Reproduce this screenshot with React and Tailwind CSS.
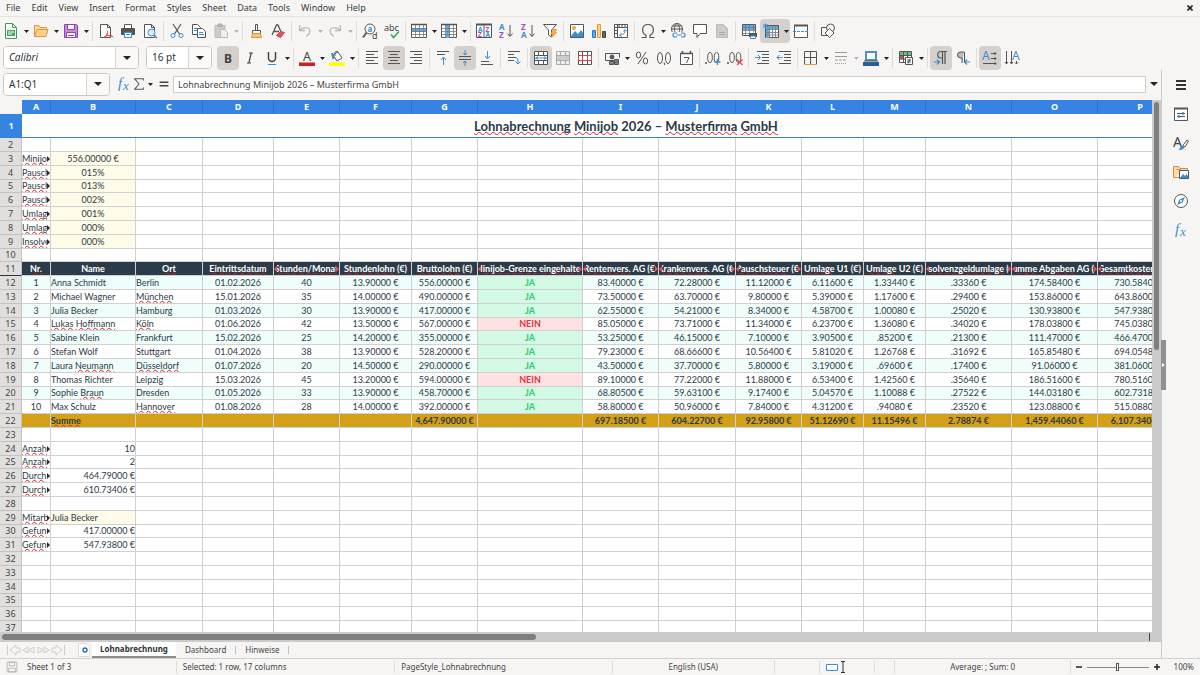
import React from "react";

/* ---------- icons (16x16 grid) ---------- */

const Svg = ({ children, size = 16, className = "" }) => (
  <svg
    width={size}
    height={size}
    viewBox="0 0 16 16"
    fill="none"
    stroke="#555"
    strokeWidth="1"
    className={`shrink-0 overflow-visible ${className}`}
    aria-hidden="true"
  >
    {children}
  </svg>
);

const Letter = ({ x, y, size, fill = "#444", bold, italic, children }) => (
  <text
    x={x}
    y={y}
    fontSize={size}
    fill={fill}
    stroke="none"
    fontFamily="Noto Sans, sans-serif"
    fontWeight={bold ? 700 : 400}
    fontStyle={italic ? "italic" : "normal"}
  >
    {children}
  </text>
);

const BLUE = "#3a8fd0";
const GRID = "M.5 5.5h15M.5 8.5h15M.5 11.5h15M4.5 1v14M8.5 1v14M12.5 1v14";

const icons = {
  new: (
    <>
      <path d="M2.5.5h7l4 4v11h-11z" fill="#fff" stroke="#3f9b52" />
      <path d="M9.5.5v4h4" stroke="#3f9b52" />
      <path d="M4 7h8v6H4z" fill="#43a85a" stroke="none" />
      <path d="M5 9h6M5 11h4" stroke="#fff" />
    </>
  ),
  open: (
    <>
      <path d="M1.5 13.5v-11h4l1.5 2h6.5v2" fill="#f9d9a0" stroke="#e0943c" />
      <path d="M1.5 13.5l2.5-7h11l-2 7z" fill="#fbd08a" stroke="#e0943c" />
    </>
  ),
  save: (
    <>
      <path d="M1.5 1.5h12l1 1v12h-13z" fill="#c98ad8" stroke="#8e44ad" />
      <path d="M4.5 1.5h7v5h-7zM3.5 9.5h9v5h-9z" fill="#fff" stroke="#8e44ad" />
      <path d="M5 12.5h6" stroke="#8e44ad" />
    </>
  ),
  pdf: (
    <>
      <path d="M2.5 1.5h7l3 3v10h-10z" fill="#fff" />
      <path d="M9.5 1.5v3h3" />
      <path d="M6 15c3-2 4-5 3.500-7M8 11c2 2 5 2.500 7 2.500M6 14c3-2 6-2 8-1" stroke="#e0444c" />
    </>
  ),
  print: (
    <>
      <path d="M4.500 1.500h7v4h-7z" fill="#fff" />
      <rect x="1" y="5" width="14" height="7" rx="1" fill="#555" stroke="none" />
      <path d="M4.500 9.500h7v5h-7z" fill="#fff" stroke={BLUE} />
      <path d="M6 11.500h4" stroke={BLUE} />
    </>
  ),
  preview: (
    <>
      <path d="M2.500 1.500h7l3 3v10h-10z" fill="#fff" />
      <path d="M9.500 1.500v3h3" />
      <circle cx="9.500" cy="9.500" r="3.500" fill="#d7ebfa" stroke={BLUE} />
      <path d="M12 12l3 3" stroke={BLUE} strokeWidth="1.500" />
    </>
  ),
  cut: (
    <>
      <path d="M4 1l6.500 10M12 1L5.500 11" stroke="#555" strokeWidth="1.200" />
      <circle cx="4" cy="12.500" r="2" stroke={BLUE} />
      <circle cx="12" cy="12.500" r="2" stroke={BLUE} />
    </>
  ),
  copy: (
    <>
      <path d="M1.500 1.500h5l3 3v7h-8z" fill="#fff" />
      <path d="M3 5.500h4M3 7.500h3" stroke={BLUE} />
      <path d="M6.500 5.500h5l3 3v6h-8z" fill="#fff" />
      <path d="M8 9.500h4M8 11.500h5" stroke={BLUE} />
    </>
  ),
  paste: (
    <>
      <path d="M2 2.500h10v12H2z" fill="#ccc" stroke="#bbb" />
      <path d="M5 1h4v2.500H5z" fill="#bbb" stroke="#aaa" />
      <path d="M7.500 6.500h4l3 3v5h-7z" fill="#eee" stroke="#bbb" />
    </>
  ),
  brush: (
    <>
      <path d="M7.500 1.500h2v6h-2z" fill="#fff" />
      <path d="M4.500 7.500h8v3h-8z" fill="#fff" />
      <path d="M4.500 10.500h8l1 4h-10z" fill="#f6c27a" stroke="#e0943c" />
    </>
  ),
  clear: (
    <>
      <path d="M2 12L6.500 2h1.500l3 7M4 8.500h5" strokeWidth="1.300" />
      <path d="M6.500 12.500l4-4 4 1-4 5z" fill="#e8505b" stroke="#d33b45" />
    </>
  ),
  undo: <path d="M2.500 2v5.500H8M2.500 7.500C6 3 13 4 13 8c0 3-2 4-4 5.500" stroke="#bbb" strokeWidth="1.300" />,
  redo: <path d="M13.500 2v5.500H8M13.500 7.500C10 3 3 4 3 8c0 3 2 4 4 5.500" stroke="#bbb" strokeWidth="1.300" />,
  find: (
    <>
      <circle cx="8" cy="6" r="5" fill="#fff" />
      <path d="M4.500 9.500L1 14.500" strokeWidth="1.800" />
      <Letter x="5.500" y="8.500" size="8" fill={BLUE} bold>a</Letter>
      <Letter x="10" y="15.500" size="9">d</Letter>
    </>
  ),
  spell: (
    <>
      <Letter x="0" y="8" size="9">abc</Letter>
      <path d="M7 11.500l2.500 3L15 8.500" stroke="#33a852" strokeWidth="1.500" />
    </>
  ),
  rows: (
    <>
      <path d="M.5 1.500h15v13H.5z" fill="#fff" />
      <path d="M1 5h14v4H1z" fill="#5aaee8" stroke="none" />
      <path d={GRID} stroke="#777" strokeWidth="0.800" />
      <path d="M0 1.500h16" strokeWidth="1.500" />
    </>
  ),
  cols: (
    <>
      <path d="M.5 1.500h15v13H.5z" fill="#fff" />
      <path d="M5 1h4v14H5z" fill="#5aaee8" stroke="none" />
      <path d={GRID} stroke="#777" strokeWidth="0.800" />
      <path d="M0 1.500h16" strokeWidth="1.500" />
    </>
  ),
  sort: (
    <>
      <path d="M.5 1.500h15v13H.5zM8 1v14" fill="#fff" />
      <path d="M0 1.500h16" strokeWidth="2" />
      <Letter x="2" y="8.500" size="6.500" fill={BLUE} bold>A</Letter>
      <Letter x="2" y="14" size="6.500" fill="#a24bbd" bold>Z</Letter>
      <Letter x="9.500" y="8.500" size="6.500" fill="#a24bbd" bold>Z</Letter>
      <Letter x="9.500" y="14" size="6.500" fill={BLUE} bold>A</Letter>
    </>
  ),
  asc: (
    <>
      <Letter x="1" y="7" size="8" fill={BLUE} bold>A</Letter>
      <Letter x="1" y="15" size="8" fill="#a24bbd" bold>Z</Letter>
      <path d="M12 2v11M9.500 10.500l2.500 3 2.500-3" />
    </>
  ),
  desc: (
    <>
      <Letter x="1" y="7" size="8" fill="#a24bbd" bold>Z</Letter>
      <Letter x="1" y="15" size="8" fill={BLUE} bold>A</Letter>
      <path d="M12 2v11M9.500 10.500l2.500 3 2.500-3" />
    </>
  ),
  filter: (
    <>
      <path d="M1.500 1.500h13L9.500 7v7l-3-2V7z" fill="#fff" />
      <path d="M11.500 6.500h3l-2 3h2l-5 5 1.500-4h-2z" fill="#f9b64a" stroke="#e89a2c" />
    </>
  ),
  image: (
    <>
      <path d="M1.500 1.500h13v13h-13z" fill="#fff" />
      <path d="M2 13l4-5 3 3 3-4 2 3v4H2z" fill="#3a8fd0" stroke="none" />
      <circle cx="5" cy="5" r="1.500" fill="#f9c05a" stroke="#e89a2c" />
    </>
  ),
  chart: (
    <>
      <path d="M1.500 7.500h3v7h-3z" fill="#5aaee8" stroke="#2a78b8" />
      <path d="M6.500 1.500h3v13h-3z" fill="#fbd08a" stroke="#e89a2c" />
      <path d="M11.500 8.500h3v6h-3z" fill="#666" stroke="#444" />
    </>
  ),
  pivot: (
    <>
      <path d="M1.500 1.500h13v13h-13zM1.500 4.500h13M4.500 1.500v13" fill="#fff" />
      <path d="M6 1.500v3M9 1.500v3M12 1.500v3M1.500 7.500h3M1.500 10.500h3" />
      <path d="M7 12c4 0 5-2 5-5M10.500 8.500L12 6.500l2 2M8.500 10l-2 2 2 2" stroke={BLUE} />
    </>
  ),
  omega: (
    <path d="M1.500 14.500H6v-2C1 9.500 1.500 1.500 8 1.500s7 8 2 11v2h4.500" strokeWidth="1.200" />
  ),
  link: (
    <>
      <circle cx="7" cy="6" r="5.500" />
      <path d="M1.500 6h11M7 .5c-3.500 3-3.500 8 0 11M7 .5c3.500 3 3.500 8 0 11M2.500 3h9" />
      <path d="M2 9h13v6H2z" fill="#f6f5f4" stroke="none" />
      <path d="M7 10H5a2 2 0 000 4h2M11 10h2a2 2 0 010 4h-2M6.500 12h5" stroke={BLUE} strokeWidth="1.200" />
    </>
  ),
  comment: <path d="M1.500 1.500h13v9H8L5 14.500v-4H1.500z" fill="#fff" />,
  headfoot: (
    <>
      <path d="M2.500 1.500h7l4 4v9h-11z" fill="#ccc" stroke="#bbb" />
      <path d="M5 9.500h6M5 11.500h6" stroke="#aaa" />
    </>
  ),
  printarea: (
    <>
      <path d="M1.500 1.500h13v11h-13z" fill="#fff" />
      <path d="M2 2h12v5H2z" fill="#5aaee8" stroke="none" />
      <path d="M1.500 4.500h13M1.500 7.500h13M1.500 10.500h8M4.500 1.500v11M8.500 1.500v11M12.500 1.500v8" stroke="#777" strokeWidth="0.800" />
      <rect x="8" y="10" width="8" height="4" fill="#555" stroke="none" />
      <path d="M9.500 13h5v2.500h-5z" fill="#fff" stroke={BLUE} />
    </>
  ),
  freeze: (
    <>
      <path d="M2.500 2.500h13v12h-13z" fill="#fff" />
      <path d="M3 3h12v3H3zM3 3h3v12H3z" fill="#5aaee8" stroke="none" />
      <path d="M2.500 6.500h13M2.500 9.500h13M2.500 12h13M6.500 2.500v12M9.500 2.500v12M12.500 2.500v12" stroke="#777" strokeWidth="0.800" />
      <path d="M0 3h5M2.500 .5v5M.5 1l4 4M4.500 1l-4 4" stroke={BLUE} />
    </>
  ),
  split: (
    <>
      <path d="M1.500 2.500h13v12h-13z" fill="#fff" />
      <path d="M1 2.500h14" strokeWidth="2" />
      <path d="M0 8.500h16" stroke={BLUE} strokeDasharray="3 1" />
    </>
  ),
  shapes: (
    <>
      <path d="M1.500 4.500h8v8h-8z" />
      <circle cx="10.500" cy="5" r="4" fill="#f6f5f4" />
      <path d="M9.500 5.500l4.500 4.500-4.500 4.500L5 10z" fill="#f6f5f4" />
    </>
  ),
  bold: <Letter x="4" y="12.500" size="12" bold>B</Letter>,
  italic: <path d="M7 3h4M5 13h4M9.200 3L6.800 13" strokeWidth="1.200" stroke="#444" />,
  underline: (
    <>
      <path d="M4.500 2v6a3.500 3.500 0 007 0V2" stroke="#444" strokeWidth="1.500" />
      <path d="M4 14.500h8" stroke={BLUE} />
    </>
  ),
  fontcolor: (
    <>
      <Letter x="4" y="11" size="12.500">A</Letter>
      <path d="M0 12.500h16v3.500H0z" fill="#c9211e" stroke="none" />
    </>
  ),
  highlight: (
    <>
      <path d="M4 5l5-3 4 6-5 3z" fill="#fff" />
      <path d="M9 2c-2-2-4 0-3 4" />
      <path d="M3 3l1.500 6" stroke={BLUE} strokeWidth="2" />
      <path d="M0 12.500h16v3.500H0z" fill="#ffff00" stroke="none" />
    </>
  ),
  left: <path d="M2 1.500h12M2 4.500h8M2 7.500h12M2 10.500h8M2 13.500h12" />,
  center: <path d="M2 1.500h12M4 4.500h8M2 7.500h12M4 10.500h8M2 13.500h12" />,
  right: <path d="M2 1.500h12M6 4.500h8M2 7.500h12M6 10.500h8M2 13.500h12" />,
  top: (
    <>
      <path d="M2 1.500h12M2 4.500h8" />
      <path d="M8.500 15V7.500M6 10l2.500-3 2.500 3" stroke={BLUE} />
    </>
  ),
  middle: (
    <>
      <path d="M2 6.500h12M2 9.500h12" />
      <path d="M8 0v5M6 3l2 2 2-2M8 16v-5M6 13l2-2 2 2" stroke={BLUE} />
    </>
  ),
  bottom: (
    <>
      <path d="M2 11.500h8M2 14.500h12" />
      <path d="M8.500 1v7.500M6 6l2.500 3 2.500-3" stroke={BLUE} />
    </>
  ),
  wrap: (
    <>
      <path d="M2 1.500h12M2 4.500h6M2 7.500h8M2 10.500h6" />
      <path d="M9 7.500c3 0 3 2 3 6M9.500 11.500l2.500 2.500 2.500-2.500" stroke={BLUE} />
    </>
  ),
  mergecenter: (
    <>
      <path d="M1.500 1.500h13v13h-13z" fill="#fff" />
      <path d="M1.500 5.500h13M1.500 10.500h13M5.500 1.500v4M10.500 1.500v4M5.500 10.500v4M10.500 10.500v4" />
      <path d="M2 8h12M5 6.500L3 8l2 1.500M11 6.500L13 8l-2 1.500" stroke={BLUE} />
    </>
  ),
  merge: (
    <>
      <path d="M1.500 1.500h13v13h-13z" fill="#eee" stroke="#aaa" />
      <path d="M2 6h12v4H2z" fill="#ccc" stroke="none" />
      <path d="M1.500 5.500h13M1.500 10.500h13M5.500 1.500v4M10.500 1.500v4M5.500 10.500v4M10.500 10.500v4" stroke="#aaa" />
    </>
  ),
  unmerge: (
    <>
      <path d="M1.500 1.500h13v13h-13z" fill="#fff" />
      <path d="M5.500 1.500v13M10.500 1.500v13" />
      <path d="M1.500 5.500h13v5h-13zM5.500 5.500v5M10.500 5.500v5" stroke="#e0444c" />
    </>
  ),
  currency: (
    <>
      <path d="M10 10.500H1.500v-7h14v4" />
      <circle cx="8" cy="7" r="2" fill="#555" />
      <path d="M10.500 9.500h4v5h-4zM10.500 12h4M5.500 11.500h4v3h-4z" fill="#888" />
    </>
  ),
  percent: (
    <>
      <ellipse cx="4.500" cy="5" rx="2.200" ry="3" />
      <ellipse cx="11.500" cy="11" rx="2.200" ry="3" />
      <path d="M12 2L4 14" />
    </>
  ),
  number: (
    <>
      <ellipse cx="4" cy="8" rx="2.500" ry="5.500" />
      <ellipse cx="12" cy="8" rx="2.500" ry="5.500" />
      <path d="M7.500 13h1v2" />
    </>
  ),
  date: (
    <>
      <path d="M2.500 3.500h12v11h-12z" fill="#fff" />
      <path d="M2 3.500h13M4.500 1v3M12.500 1v3" strokeWidth="1.600" />
      <path d="M6 7.500h5l-2.500 5.500" />
    </>
  ),
  adddec: (
    <>
      <ellipse cx="5" cy="7.500" rx="2.300" ry="5" />
      <ellipse cx="11.500" cy="7.500" rx="2.300" ry="5" />
      <path d="M0 13h2" strokeWidth="1.500" />
      <path d="M12.500 9v6M9.500 12h6" stroke={BLUE} strokeWidth="1.300" />
    </>
  ),
  deldec: (
    <>
      <ellipse cx="5" cy="7.500" rx="2.300" ry="5" />
      <ellipse cx="11.500" cy="7.500" rx="2.300" ry="5" />
      <path d="M0 13h2" strokeWidth="1.500" />
      <path d="M10 9.500l5.500 5.500M15.500 9.500L10 15" stroke="#e0444c" strokeWidth="1.300" />
    </>
  ),
  indent: (
    <>
      <path d="M3 1.500h12M8 4.500h7M8 7.500h7M8 10.500h7M3 13.500h12" />
      <path d="M1 7.500h5M4 5l2.500 2.500L4 10" stroke={BLUE} />
    </>
  ),
  outdent: (
    <>
      <path d="M3 1.500h12M8 4.500h7M8 7.500h7M8 10.500h7M3 13.500h12" />
      <path d="M1 7.500h5.500M3.500 5L1 7.500 3.500 10" stroke={BLUE} />
    </>
  ),
  border: (
    <>
      <path d="M1.500 14V1.500h12V14M7.500 1.500V14M1.500 7.500h12" />
      <path d="M1 14.500h13" stroke="#e89a2c" />
    </>
  ),
  linestyle: (
    <>
      <path d="M2 2.500h12M2 6.500h12" stroke="#999" />
      <path d="M2 10h12" stroke="#999" strokeDasharray="3 1" />
      <path d="M2 13.500h12" stroke="#999" strokeDasharray="1 1" />
    </>
  ),
  bordercolor: (
    <>
      <path d="M3 2h10v8H3z" fill="#fff" stroke="#4a90d0" strokeWidth="2" />
      <path d="M1 11h14" />
      <path d="M0 12h16v4H0z" fill="#2a6099" stroke="none" />
    </>
  ),
  condfmt: (
    <>
      <path d="M1.500 1.500h12v11h-12z" fill="#fff" />
      <path d="M2 2h5v3H2z" fill="#66c27a" stroke="none" />
      <path d="M6 2h7v3H6z" fill="#66c27a" stroke="none" />
      <path d="M2 6h4v3H2z" fill="#e0444c" stroke="none" />
      <path d="M1.500 5.500h12M1.500 9h12M5.500 1.500v11M9.500 1.500v11" />
      <path d="M7.500 7.500h7v7h-7zM9 10h4M9 12h4M12 9l-2 4.500" fill="#fff" />
    </>
  ),
  ltr: (
    <>
      <path d="M9.500 14V2M12 14V2M14 1.500H8a3.200 3.200 0 000 6.500h1" fill="none" strokeWidth="1.200" />
      <path d="M1 12h5M4 9.500L6.500 12 4 14.500" stroke={BLUE} strokeWidth="1.200" />
    </>
  ),
  rtl: (
    <>
      <path d="M9 2H5.500a3 3 0 000 6H7v5M9.500 2v11" fill="#bbb" />
      <path d="M15 12h-5M12 9.500L9.500 12l2.500 2.500" stroke={BLUE} strokeWidth="1.200" />
    </>
  ),
  horiz: (
    <>
      <Letter x="0" y="10" size="12" fill={BLUE}>A</Letter>
      <path d="M9 3.500h5M12.500 2l1.500 1.500L12.500 5M9 8.500h5M12.500 7l1.500 1.500-1.500 1.500M1 13.500h13M12.500 12l1.500 1.500-1.500 1.500" />
    </>
  ),
  vert: (
    <>
      <Letter x="8" y="10" size="12" fill={BLUE}>A</Letter>
      <path d="M2.500 1v13M1 12l1.500 2L4 12M7.500 1v13M6 12l1.500 2L9 12M12.500 11v3M11 12.500l1.500 1.500 1.500-1.500" />
    </>
  ),
  menu: <path d="M3 4h10M3 8h10M3 12h10" stroke="#333" strokeWidth="2" />,
  properties: (
    <>
      <path d="M1.500 2.500h13v12h-13z" fill="#fff" />
      <path d="M1 2.500h14" strokeWidth="2" />
      <path d="M4 7.500h8M4 10.500h8" />
      <path d="M10 6v3M6 9v3" stroke={BLUE} strokeWidth="1.500" />
    </>
  ),
  styles: (
    <>
      <Letter x="0" y="12" size="14">A</Letter>
      <path d="M9.500 11l4.500-6 1.500 1-3.500 6z" fill="#fff" />
      <path d="M5 14.500c2 0 2-3.500 5-3.500 3 2-1 5-5 3.500z" fill={BLUE} stroke="none" />
    </>
  ),
  gallery: (
    <>
      <path d="M.5 13.500v-11h5l1.500 2h7.500v2" fill="#fbd9a8" stroke="#e0843c" />
      <path d="M3.500 5.500h4v8h-7" stroke="#e0843c" />
      <path d="M6.500 6.500h9v8h-9z" fill="#fff" />
      <path d="M7 14l3-4 2 2 1.500-2 1.500 2v2z" fill={BLUE} stroke="none" />
    </>
  ),
  navigator: (
    <>
      <circle cx="8" cy="8" r="6.500" fill="#fff" />
      <path d="M12 4L9.500 9.500 4 12l2.500-5.500z" fill={BLUE} stroke="none" />
      <circle cx="8" cy="8" r="1" fill="#fff" stroke="none" />
    </>
  ),
  sigma: <path d="M13 4V2H3l5 6-5 6h10v-2" stroke="#555" strokeWidth="1.200" />,
  equals: <path d="M3 6h10M3 10h10" stroke="#444" strokeWidth="1.800" />,
};

const FxIcon = () => (
  <svg width="16" height="16" viewBox="0 0 16 16" className="overflow-visible" aria-hidden="true">
    <text x="2" y="12" fontSize="15" fontStyle="italic" fontFamily="Liberation Serif, serif" fill={BLUE}>f</text>
    <text x="7" y="14" fontSize="13" fontStyle="italic" fontFamily="Liberation Serif, serif" fill={BLUE}>x</text>
  </svg>
);

const Caret = ({ dim, wide }) => (
  <svg width={wide ? 8 : 5} height={wide ? 4 : 3} viewBox="0 0 8 4" preserveAspectRatio="none" aria-hidden="true">
    <path d="M0 0h8L4 4z" fill={dim ? "#b5b5b5" : "#222"} />
  </svg>
);

/* ---------- toolbars ---------- */

const Sep = () => (
  <div className="flex h-5 w-[5px] shrink-0 justify-center">
    <div className="w-px bg-[#dfdcd9]" />
  </div>
);

// "name" = plain button, "name+" = with drop-down arrow, "*" = pressed, "~" = dimmed arrow, "|" = separator
const Tool = ({ id }) => {
  if (id === "|") return <Sep />;
  const name = id.replace(/[+*~]/g, "");
  const pressed = id.includes("*");
  const arrow = id.includes("+");
  return (
    <div className={`flex h-6 shrink-0 rounded ${pressed ? "bg-[#d5d0cc]" : ""}`}>
      <button type="button" aria-label={name} aria-pressed={pressed} className="flex w-[22px] items-center justify-center">
        <Svg>{icons[name]}</Svg>
      </button>
      {arrow && (
        <button type="button" aria-label={`${name} options`} className="flex w-2 items-center justify-end pr-px pt-px">
          <Caret dim={id.includes("~")} />
        </button>
      )}
    </div>
  );
};

const standardBar =
  "new+ open+ save+ | pdf print preview | cut copy paste+~ | brush clear | undo+~ redo+~ | find spell | rows+ cols+ | sort asc desc filter | image chart pivot | omega+ link comment headfoot | printarea freeze+* split | shapes";

const formatBar =
  "bold* italic underline+ | fontcolor+ highlight+ | left center* right | top middle* bottom | wrap | mergecenter* merge unmerge | currency+ percent number date | adddec deldec | indent outdent | border+ linestyle+~ bordercolor+ | condfmt+ | ltr* rtl | horiz* vert";

const Combo = ({ label, value, className = "", inputClass = "" }) => (
  <div className={`flex h-[23px] shrink-0 overflow-hidden rounded border border-[#cdc7c2] bg-white ${className}`}>
    <input
      aria-label={label}
      defaultValue={value}
      className={`min-w-0 flex-1 bg-white pl-[5px] text-[10px] text-[#2e3436] outline-none ${inputClass}`}
    />
    <button
      type="button"
      aria-label={`${label} list`}
      className="flex w-[23px] items-center justify-center border-l border-[#d9d5d1] bg-[#faf9f8]"
    >
      <Caret wide />
    </button>
  </div>
);

const MenuBar = () => (
  <nav className="flex h-[17px] items-center gap-[11px] border-b border-[#e6e3e0] pl-1.5 pr-[7px] text-[9px]">
    {["File", "Edit", "View", "Insert", "Format", "Styles", "Sheet", "Data", "Tools", "Window", "Help"].map((m) => (
      <button key={m} type="button">{m}</button>
    ))}
    <button type="button" aria-label="Close" className="ml-auto">
      <svg width="6" height="6" viewBox="0 0 6 6" stroke="#222" strokeWidth="1.600">
        <path d="M.5.5l5 5M5.500.5l-5 5" />
      </svg>
    </button>
  </nav>
);

const FormulaBar = () => (
  <div className="flex h-[30px] shrink-0 items-center pb-0.5 pl-[3px]">
    <Combo label="Name Box" value="A1:Q1" className="w-[107px]" />
    <div className="ml-[6px] flex w-[57px] shrink-0 items-center">
      <button type="button" aria-label="Function Wizard"><FxIcon /></button>
      <button type="button" aria-label="Select Function" className="flex items-center gap-0.5">
        <Svg size={14}>{icons.sigma}</Svg>
        <Caret />
      </button>
      <button type="button" aria-label="Formula" className="ml-1"><Svg size={14}>{icons.equals}</Svg></button>
    </div>
    <input
      aria-label="Input line"
      defaultValue="Lohnabrechnung Minijob 2026 – Musterfirma GmbH"
      className="h-[17px] min-w-0 flex-1 border border-[#cfcbc7] bg-white pl-1 text-[9px] text-[#444] outline-none"
    />
    <button type="button" aria-label="Expand formula bar" className="flex w-[15px] justify-center">
      <Caret wide />
    </button>
  </div>
);

/* ---------- sheet ---------- */

const columns = [
  ["A", 29], ["B", 85], ["C", 67], ["D", 71], ["E", 66], ["F", 72], ["G", 66], ["H", 105], ["I", 76],
  ["J", 77], ["K", 66], ["L", 62], ["M", 62], ["N", 86], ["O", 86], ["P", 85], ["Q", 47],
];

// words between underscores get the spell-check underline
const headings = [
  "_Nr._", "Name", "_Ort_", "_Eintrittsdatum_", "_Stunden/Monat_", "_Stundenlohn_ (€)", "_Bruttolohn_ (€)",
  "_Minijob-Grenze_ _eingehalten_", "_Rentenvers._ AG (€)", "_Krankenvers._ AG (€)", "_Pauschsteuer_ (€)",
  "_Umlage_ U1 (€)", "_Umlage_ U2 (€)", "_Insolvenzgeldumlage_ (€)", "_Summe_ _Abgaben_ AG (€)",
  "_Gesamtkosten_ AG (€)", "",
];
const clippedHeadings = ["E", "H", "I", "J", "K", "N", "O", "P"];

const employees = [
  ["1", "Anna Schmidt", "Berlin", "01.02.2026", "40", "13.90000 €", "556.00000 €", "JA", "83.40000 €", "72.28000 €", "11.12000 €", "6.11600 €", "1.33440 €", ".33360 €", "174.58400 €", "730.58400 €", ""],
  ["2", "Michael Wagner", "_München_", "15.01.2026", "35", "14.00000 €", "490.00000 €", "JA", "73.50000 €", "63.70000 €", "9.80000 €", "5.39000 €", "1.17600 €", ".29400 €", "153.86000 €", "643.86000 €", ""],
  ["3", "Julia Becker", "Hamburg", "01.03.2026", "30", "13.90000 €", "417.00000 €", "JA", "62.55000 €", "54.21000 €", "8.34000 €", "4.58700 €", "1.00080 €", ".25020 €", "130.93800 €", "547.93800 €", ""],
  ["4", "_Lukas_ _Hoffmann_", "_Köln_", "01.06.2026", "42", "13.50000 €", "567.00000 €", "NEIN", "85.05000 €", "73.71000 €", "11.34000 €", "6.23700 €", "1.36080 €", ".34020 €", "178.03800 €", "745.03800 €", ""],
  ["5", "Sabine Klein", "Frankfurt", "15.02.2026", "25", "14.20000 €", "355.00000 €", "JA", "53.25000 €", "46.15000 €", "7.10000 €", "3.90500 €", ".85200 €", ".21300 €", "111.47000 €", "466.47000 €", ""],
  ["6", "Stefan Wolf", "Stuttgart", "01.04.2026", "38", "13.90000 €", "528.20000 €", "JA", "79.23000 €", "68.66600 €", "10.56400 €", "5.81020 €", "1.26768 €", ".31692 €", "165.85480 €", "694.05480 €", ""],
  ["7", "Laura _Neumann_", "_Düsseldorf_", "01.07.2026", "20", "14.50000 €", "290.00000 €", "JA", "43.50000 €", "37.70000 €", "5.80000 €", "3.19000 €", ".69600 €", ".17400 €", "91.06000 €", "381.06000 €", ""],
  ["8", "Thomas Richter", "Leipzig", "15.03.2026", "45", "13.20000 €", "594.00000 €", "NEIN", "89.10000 €", "77.22000 €", "11.88000 €", "6.53400 €", "1.42560 €", ".35640 €", "186.51600 €", "780.51600 €", ""],
  ["9", "Sophie _Braun_", "Dresden", "01.05.2026", "33", "13.90000 €", "458.70000 €", "JA", "68.80500 €", "59.63100 €", "9.17400 €", "5.04570 €", "1.10088 €", ".27522 €", "144.03180 €", "602.73180 €", ""],
  ["10", "Max Schulz", "_Hannover_", "01.08.2026", "28", "14.00000 €", "392.00000 €", "JA", "58.80000 €", "50.96000 €", "7.84000 €", "4.31200 €", ".94080 €", ".23520 €", "123.08800 €", "515.08800 €", ""],
];

const totals = ["", "_Summe_", "", "", "", "", "4,647.90000 €", "", "697.18500 €", "604.22700 €", "92.95800 €", "51.12690 €", "11.15496 €", "2.78874 €", "1,459.44060 €", "6,107.34060 €", ""];

const params = {
  3: ["Minijob", "556.00000 €"],
  4: ["Pausch", "015%"],
  5: ["Pausch", "013%"],
  6: ["Pausch", "002%"],
  7: ["Umlage", "001%"],
  8: ["Umlage", "000%"],
  9: ["Insolve", "000%"],
};

const stats = {
  24: ["Anzahl", "10"],
  25: ["Anzahl", "2"],
  26: ["Durch", "464.79000 €"],
  27: ["Durch", "610.73406 €"],
  29: ["Mitarb", "Julia Becker"],
  30: ["Gefun", "417.00000 €"],
  31: ["Gefun", "547.93800 €"],
};

const Spelled = ({ text }) =>
  text.split("_").map((part, i) =>
    i % 2 ? (
      <span
        key={i}
        className="underline decoration-[#e01b24] decoration-wavy decoration-1 underline-offset-0 [text-decoration-skip-ink:none]"
      >
        {part}
      </span>
    ) : (
      part
    )
  );

// small triangle telling that the text goes on past the cell edge
const Overflow = ({ side, color, backing }) => (
  <span className={`absolute inset-y-0 flex w-[3px] items-center ${side === "left" ? "left-0" : "right-0"} ${backing}`}>
    <svg width="3" height="6" viewBox="0 0 3 6" className={side === "left" ? "rotate-180" : ""} aria-hidden="true">
      <path d="M0 0l3 3-3 3z" fill={color} />
    </svg>
  </span>
);

const cellFor = (row, col) => {
  if (row === 11) {
    return { text: headings[col], style: "bg-[#2c3b49] text-white font-bold text-center", clip: clippedHeadings.includes(columns[col][0]) ? "both" : "" };
  }
  if (row >= 12 && row <= 21) {
    const text = employees[row - 12][col];
    let style = row % 2 === 0 ? "bg-[#effefb]" : "bg-white";
    if (text === "JA") style = "bg-[#d1f9e4] text-[#2ecc71] font-bold";
    if (text === "NEIN") style = "bg-[#fee2e2] text-[#dc3545] font-bold";
    return { text, style: `${style} ${col === 1 || col === 2 ? "text-left" : "text-center"}` };
  }
  if (row === 22) {
    return { text: totals[col], style: `bg-[#d4a017] font-bold ${col === 1 ? "text-left" : "text-center"}` };
  }
  const entry = params[row] || stats[row];
  if (!entry || col > 1) return { text: "", style: "bg-white" };
  if (col === 0) return { text: `_${entry[0]}_`, style: "bg-white", clip: "right" };
  if (params[row]) return { text: entry[1], style: "bg-[#fefbe9] text-center" };
  if (row === 29) return { text: entry[1], style: "bg-[#fefbe9] text-left" };
  return { text: entry[1], style: "bg-white text-right" };
};

const rowNumbers = Array.from({ length: 36 }, (_, i) => i + 2);

const Sheet = () => (
  <div className="min-w-0 flex-1 overflow-hidden bg-white">
    <table className="w-[1230px] table-fixed border-separate border-spacing-0 font-[Lato,Carlito,sans-serif] text-[9px] leading-3 text-[#2c3a47]">
      <colgroup>
        <col style={{ width: 22 }} />
        {columns.map(([name, width]) => (
          <col key={name} style={{ width }} />
        ))}
      </colgroup>
      <thead className="font-['Noto_Sans',sans-serif] text-[9px]">
        <tr className="h-[14px]">
          <th className="bg-[#f6f5f4] p-0" aria-label="Select all" />
          {columns.map(([name]) => (
            <th key={name} scope="col" className="border-r border-[#2a74cf] bg-[#3584e4] p-0 font-bold text-white">
              {name}
            </th>
          ))}
        </tr>
      </thead>
      <tbody>
        <tr className="h-6">
          <th scope="row" className="border-b border-[#3584c8] bg-[#3584e4] p-0 font-['Noto_Sans',sans-serif] font-bold text-white">
            1
          </th>
          <td colSpan={17} className="border-b border-[#3584c8] bg-white p-0 text-center text-[13px] font-bold leading-5">
            <Spelled text="_Lohnabrechnung_ _Minijob_ 2026 – _Musterfirma_ _GmbH_" />
          </td>
        </tr>
        {rowNumbers.map((row) => (
          <tr key={row} className={row % 5 === 0 ? "h-[13px]" : "h-[14px]"}>
            <th
              scope="row"
              className={`border-b border-r bg-[#e1dfdd] p-0 font-['Noto_Sans',sans-serif] font-normal text-[#444] ${
                row === 11 ? "border-r-[#c4c2c0] border-b-[#333]" : "border-[#c4c2c0]"
              }`}
            >
              {row}
            </th>
            {columns.map(([name], col) => {
              const { text, style, clip } = cellFor(row, col);
              return (
                <td key={name} className={`relative overflow-hidden whitespace-nowrap border-b border-r border-[#d0d0d0] p-0 ${style}`}>
                  {clip === "both" ? (
                    <div className="flex justify-center overflow-hidden">
                      <span className="shrink-0"><Spelled text={text} /></span>
                      <Overflow side="left" color="#f05050" backing="bg-[#2c3b49]" />
                      <Overflow side="right" color="#f05050" backing="bg-[#2c3b49]" />
                    </div>
                  ) : (
                    <Spelled text={text} />
                  )}
                  {clip === "right" && <Overflow side="right" color="#4a1c1c" backing="bg-white" />}
                </td>
              );
            })}
          </tr>
        ))}
      </tbody>
    </table>
  </div>
);

const SheetTabs = () => (
  <div className="flex h-[16px] shrink-0 items-stretch text-[8px] text-[#444]">
    <div className="flex w-[78px] items-center pl-1.5">
      {["First", "Previous", "Next", "Last"].map((label, i) => (
        <button key={label} type="button" aria-label={`${label} sheet`}>
          <svg width="15" height="12" viewBox="0 0 15 12" fill="none" stroke="#cfccc9">
            {i === 0 && <path d="M1.500 1v10M10 1L4 6l6 5V8h4V4h-4z" />}
            {i === 1 && <path d="M7 3L2 6l5 3zM13 3L8 6l5 3z" />}
            {i === 2 && <path d="M2 3l5 3-5 3zM8 3l5 3-5 3z" />}
            {i === 3 && <path d="M13.500 1v10M5 1l6 5-6 5V8H1V4h4z" />}
          </svg>
        </button>
      ))}
    </div>
    <button type="button" aria-label="Add sheet" className="w-[14px]">
      <svg width="13" height="14" viewBox="0 0 13 14" fill="#fff" stroke="#dcd9d6">
        <path d="M.5 13.500V.5h8l3 3v10z" />
        <circle cx="7" cy="7" r="2" stroke="#2a5fc0" strokeWidth="1.300" />
      </svg>
    </button>
    <button type="button" className="border-b-2 border-[#8d8d8d] bg-white px-2 font-bold leading-3 text-[#2e3436]">
      Lohnabrechnung
    </button>
    <button type="button" className="px-[9px]">Dashboard</button>
    <div className="my-1 w-px bg-[#c4c2c0]" />
    <button type="button" className="px-[9px]">Hinweise</button>
    <div className="my-1 w-px bg-[#c4c2c0]" />
  </div>
);

const Sidebar = () => (
  <aside className="flex w-[39px] shrink-0 flex-col items-center border-l border-[#cfcbc7]">
    {["menu", "properties", "styles", "gallery", "navigator"].map((name) => (
      <button key={name} type="button" aria-label={name} className="flex h-[29px] w-7 items-center justify-center">
        <Svg>{icons[name]}</Svg>
      </button>
    ))}
    <button type="button" aria-label="functions" className="flex h-[29px] w-7 items-center justify-center">
      <FxIcon />
    </button>
  </aside>
);

const StatusBar = () => (
  <footer className="flex h-[17px] shrink-0 items-center border-t border-[#d4d0cc] text-[8px] text-[#444]">
    <div className="flex flex-[175] items-center gap-[9px] pl-1.5">
      <Svg size={12}>
        <path d="M1.500 1.500h13v13h-13zM4.500 1.500h7v5h-7zM3.500 9.500h9v5h-9z" stroke="#aaa" />
      </Svg>
      Sheet 1 of 3
    </div>
    <div className="flex-[218] border-l border-[#dedbd8] pl-1.5">Selected: 1 row, 17 columns</div>
    <div className="flex-[217] border-l border-[#dedbd8] pl-1.5">PageStyle_Lohnabrechnung</div>
    <div className="flex-[166] border-l border-[#dedbd8] text-center">English (USA)</div>
    <div className="h-3 flex-[46] border-l border-[#dedbd8]" />
    <div className="flex h-3 flex-[49] items-center gap-1 border-l border-[#dedbd8] pl-1.5">
      <svg width="20" height="12" viewBox="0 0 20 12" fill="none">
        <path d="M.5 3.500h11v6H.5z" stroke={BLUE} fill="#fff" />
        <path d="M15 .5h4M15 11.500h4M17 .5v11" stroke="#333" />
      </svg>
    </div>
    <div className="h-3 flex-[20] border-l border-[#dedbd8]" />
    <div className="flex-[180] border-l border-[#dedbd8] text-center">Average: ; Sum: 0</div>
    <div className="flex flex-[129] items-center border-l border-[#dedbd8] pl-1">
      <button type="button" aria-label="Zoom out">
        <svg width="8" height="8" viewBox="0 0 8 8" stroke="#222" strokeWidth="1.500"><path d="M1 4h6" /></svg>
      </button>
      <input
        type="range"
        aria-label="Zoom"
        min="0"
        max="100"
        defaultValue="50"
        className="mx-1 h-2 w-[62px] appearance-none bg-[linear-gradient(#888,#888)] bg-[length:100%_1px] bg-center bg-no-repeat [&::-webkit-slider-thumb]:h-2 [&::-webkit-slider-thumb]:w-[3px] [&::-webkit-slider-thumb]:appearance-none [&::-webkit-slider-thumb]:border [&::-webkit-slider-thumb]:border-[#555] [&::-webkit-slider-thumb]:bg-white"
      />
      <button type="button" aria-label="Zoom in">
        <svg width="8" height="8" viewBox="0 0 8 8" stroke="#222" strokeWidth="1.500"><path d="M1 4h6M4 1v6" /></svg>
      </button>
      <span className="ml-auto pr-1.5">100%</span>
    </div>
  </footer>
);

export default function App() {
  return (
    <div className="flex h-screen flex-col overflow-hidden bg-[#f6f5f4] font-['Noto_Sans',sans-serif] text-[#3a3f41]">
      <header className="shrink-0">
        <MenuBar />
        <div className="flex h-7 items-center">
          {standardBar.split(" ").map((id, i) => (
            <Tool key={i} id={id} />
          ))}
        </div>
        <div className="flex h-[25px] items-center pl-[3px]">
          <Combo label="Font Name" value="Calibri" className="w-[136px]" inputClass="italic" />
          <Combo label="Font Size" value="16 pt" className="ml-[7px] mr-[5px] w-[66px]" />
          {formatBar.split(" ").map((id, i) => (
            <Tool key={i} id={id} />
          ))}
        </div>
      </header>

      <main className="flex min-h-0 flex-1">
        <div className="flex min-w-0 flex-1 flex-col">
          <FormulaBar />
          <div className="flex min-h-0 flex-1">
            <Sheet />
            <div className="w-[9px] shrink-0 bg-[#cbcbcb] p-0.5">
              <div className="h-[47%] w-[5px] rounded-full bg-[#7d7f7e]" />
            </div>
          </div>
          <div className="flex h-[10px] shrink-0 items-center bg-[#cbcbcb] pl-0.5 pr-[11px]">
            <div className="h-1.5 w-[46.5%] rounded-full bg-[#7d7f7e]" />
            <div className="ml-auto h-2 w-px bg-[#444]" />
          </div>
          <SheetTabs />
        </div>
        <div className="relative">
          <button
            type="button"
            aria-label="Hide sidebar"
            className="absolute top-[46%] left-0 flex h-[50px] w-[5px] items-center justify-center bg-[#8f9190]"
          >
            <svg width="3" height="4" viewBox="0 0 3 4"><path d="M0 0l3 2-3 2z" fill="#fff" /></svg>
          </button>
        </div>
        <Sidebar />
      </main>

      <StatusBar />
    </div>
  );
}
